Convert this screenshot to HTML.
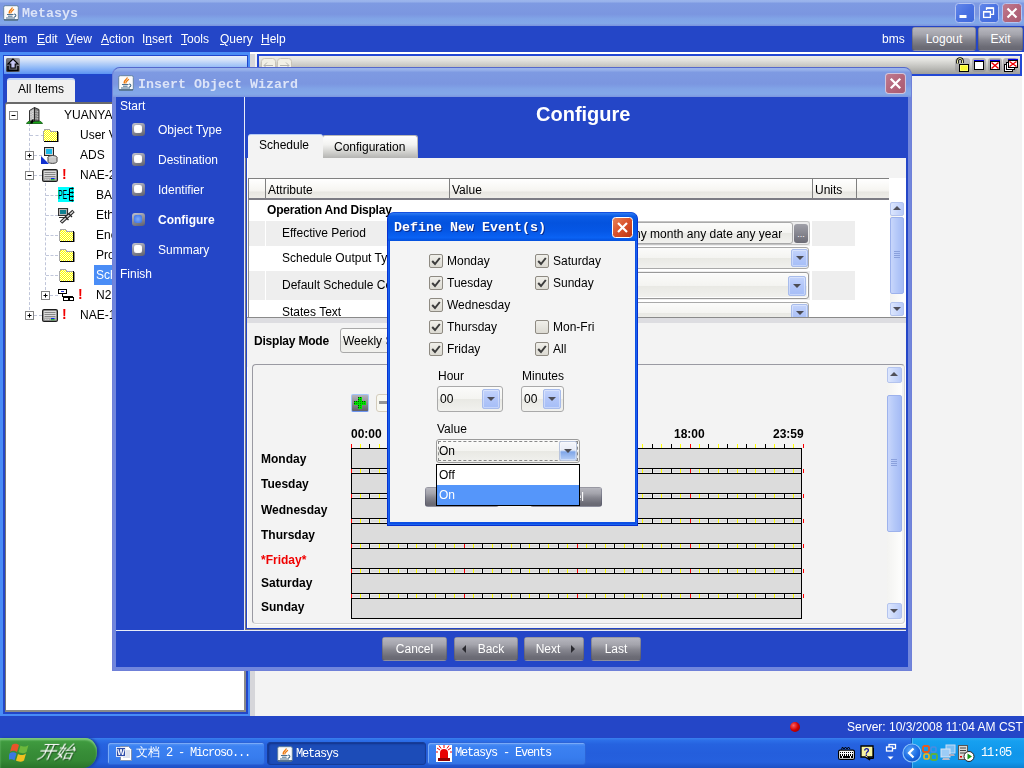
<!DOCTYPE html>
<html><head><meta charset="utf-8"><title>Metasys</title>
<style>
*{box-sizing:border-box;margin:0;padding:0}
html,body{width:1024px;height:768px;overflow:hidden;background:#2446C7;font-family:"Liberation Sans",sans-serif;font-size:12px;color:#000}
.a{position:absolute}
.t{position:absolute;white-space:nowrap;line-height:16px;font-size:12px;will-change:transform}
.w{color:#fff}
.mono{font-family:"Liberation Mono","WenQuanYi Zen Hei",monospace;font-weight:bold;font-size:13.33px}
.b{font-weight:bold}
.gbtn{position:absolute;border-radius:3px;background:linear-gradient(#B6B6BE 0,#A4A4AC 30%,#85858E 55%,#6C6C76 85%,#686872 100%);color:#fff;text-align:center;font-size:12px;border:1px solid rgba(70,74,100,0.35);border-top-color:rgba(200,200,210,0.5)}
.cb{position:absolute;width:14px;height:14px;border:1px solid #8E8A82;border-radius:2px;background:linear-gradient(#F0EFEA,#DCDAD2)}
.cb svg{position:absolute;left:1px;top:1px}
.combo{position:absolute;border:1px solid #A9A9A9;border-radius:3px;background:linear-gradient(#FBFBFA 0,#F4F4F1 50%,#E9E9E4 52%,#F1F1EE 100%)}
.arr{position:absolute;border:1px solid #A8BCEB;border-radius:2px;background:linear-gradient(#C4D4FB,#B2C6F9 50%,#A6BEF7 100%);box-shadow:inset 0 0 0 1px rgba(255,255,255,0.35)}
.arr:after{content:"";position:absolute;left:50%;top:50%;margin:-2px 0 0 -4px;border:4px solid transparent;border-top:4px solid #4C4C54;border-bottom:0}
.sbtn{position:absolute;border:1px solid #B4C4EE;border-radius:2px;background:linear-gradient(90deg,#DCE6FD,#B9CBF9)}
.hd{position:absolute;top:178px;height:22px;border-left:1px solid #808080;border-top:1px solid #808080;border-bottom:2px solid #7C7C84;background:linear-gradient(#FFFFFF 0,#F6F5F1 60%,#E8E7E2 70%,#EEEDE8 100%)}
</style></head><body>
<div class="a" style="left:0;top:0;width:1024px;height:26px;background:linear-gradient(#9CB5EC 0,#98B2EB 6%,#7E9AE2 13%,#7B96E0 55%,#81A4E7 72%,#83A8E8 90%,#7A92DD 100%)"></div>
<svg class="a" style="left:3px;top:5px" width="16" height="16" viewBox="0 0 16 16"><rect x="0.700" y="0.700" width="14.600" height="14.600" rx="1.500" fill="#FBFBFA" stroke="#5E7E9C" stroke-width="0.900"/><path d="M1 14.800h14" stroke="#3C5C78" stroke-width="1.200"/><path d="M6.500 8.500c-1.500-2 1.500-3.500 3-6M8 8.500c-1-1.500 1.500-2.500 2.800-4.500" stroke="#EE7A10" stroke-width="1.300" fill="none"/><path d="M4 9.500h6.500M5 11.200h4.500M3 13h9" stroke="#4A7090" stroke-width="1"/><path d="M11 9c2.500 0 2.500 2.800 0 3" stroke="#4A7090" stroke-width="1.100" fill="none"/></svg>
<div class="t mono" style="left:22px;top:6px;color:#DCE4F8">Metasys</div>
<svg class="a" width="0" height="0"><defs><linearGradient id="wb" x1="0" y1="0" x2="1" y2="1"><stop offset="0" stop-color="#6488EA"/><stop offset="0.500" stop-color="#4A72E2"/><stop offset="1" stop-color="#3E68DC"/></linearGradient><linearGradient id="wc" x1="0" y1="0" x2="1" y2="1"><stop offset="0" stop-color="#C07C90"/><stop offset="0.500" stop-color="#B4667C"/><stop offset="1" stop-color="#A85A70"/></linearGradient></defs></svg>
<svg class="a" style="left:955px;top:3px" width="20" height="20" viewBox="0 0 20 20"><rect x="0.500" y="0.500" width="19" height="19" rx="3" fill="url(#wb)" stroke="#B4C4F2"/><rect x="4.500" y="12" width="7" height="3" fill="#fff"/></svg>
<svg class="a" style="left:979px;top:3px" width="20" height="20" viewBox="0 0 20 20"><rect x="0.500" y="0.500" width="19" height="19" rx="3" fill="url(#wb)" stroke="#B4C4F2"/><path d="M7.500 7V4.800h7v6.500H12" fill="none" stroke="#fff" stroke-width="1.300"/><path d="M7.500 5.300h7" stroke="#fff" stroke-width="1.600"/><rect x="4.600" y="8.600" width="6.800" height="5.800" fill="none" stroke="#fff" stroke-width="1.300"/><path d="M4.600 8.800h6.800" stroke="#fff" stroke-width="1.600"/></svg>
<svg class="a" style="left:1002px;top:3px" width="20" height="20" viewBox="0 0 20 20"><rect x="0.500" y="0.500" width="19" height="19" rx="3" fill="url(#wc)" stroke="#B4C4F2"/><path d="M5.500 5.500l9 9M14.500 5.500l-9 9" stroke="#fff" stroke-width="2.200"/></svg>
<div class="a" style="left:0;top:26px;width:1024px;height:27px;background:#2446C7"></div>
<div class="t w" style="left:4px;top:31px"><u>I</u>tem</div>
<div class="t w" style="left:37px;top:31px"><u>E</u>dit</div>
<div class="t w" style="left:66px;top:31px"><u>V</u>iew</div>
<div class="t w" style="left:101px;top:31px"><u>A</u>ction</div>
<div class="t w" style="left:142px;top:31px">I<u>n</u>sert</div>
<div class="t w" style="left:181px;top:31px"><u>T</u>ools</div>
<div class="t w" style="left:220px;top:31px"><u>Q</u>uery</div>
<div class="t w" style="left:261px;top:31px"><u>H</u>elp</div>
<div class="t w" style="left:882px;top:31px">bms</div>
<div class="gbtn" style="left:912px;top:27px;width:64px;height:24px;line-height:22px">Logout</div>
<div class="gbtn" style="left:978px;top:27px;width:45px;height:24px;line-height:22px">Exit</div>
<div class="a" style="left:0;top:52px;width:250px;height:664px;background:#2446C7;border:2px solid #4A8CF6;border-left-width:3px;border-top-width:3px"></div>
<div class="a" style="left:3px;top:55px;width:245px;height:21px;border:1px solid #2046CC;border-bottom-width:2px;background:linear-gradient(#EAF0F9 0,#D0DFF8 25%,#98BEF7 60%,#5C93F3 100%)"></div>
<svg class="a" style="left:6px;top:58px" width="14" height="14" viewBox="0 0 14 14"><defs><linearGradient id="tg" x1="0" y1="1" x2="1" y2="0"><stop offset="0" stop-color="#3C3C44"/><stop offset="1" stop-color="#A8A8B0"/></linearGradient></defs><rect width="14" height="14" rx="1.500" fill="url(#tg)"/><path d="M7 1L2 6h2.800v4h4.400V6H12z" fill="#C8C8F4" stroke="#000" stroke-width="1.100"/><path d="M2 8v4.500h10V8" fill="none" stroke="#000" stroke-width="1.500"/></svg>
<div class="a" style="left:7px;top:78px;width:68px;height:25px;background:#F0F0F0;border-radius:3px 3px 0 0;border-top:2px solid #BFD4F8"></div>
<div class="t" style="left:18px;top:81px">All Items</div>
<div class="a" style="left:5px;top:102px;width:241px;height:610px;background:#fff;border:2px solid #8A8A8A;border-left:1px solid #767676;border-top:2px solid #6A6A6A;border-radius:3px 0 0 0"></div>
<div class="a" style="left:250px;top:52px;width:774px;height:664px;background:#F3F3F3"></div>
<div class="a" style="left:250px;top:52px;width:5px;height:664px;background:#D6D6DA"></div>
<div class="a" style="left:250px;top:52px;width:774px;height:2px;background:#fff"></div>
<div class="a" style="left:257px;top:54px;width:765px;height:22px;border:2px solid #2348D4;background:linear-gradient(#EEEEEA 0,#E0E0DC 25%,#BEBEBA 65%,#9E9E9A 100%)"></div>
<div class="a" style="left:972px;top:58px;width:14px;height:14px;border-radius:3px;background:#8E8E92;opacity:0.55"></div>
<div class="a" style="left:988px;top:58px;width:14px;height:14px;border-radius:3px;background:#8E8E92;opacity:0.55"></div>
<div class="a" style="left:1003px;top:58px;width:14px;height:14px;border-radius:3px;background:#8E8E92;opacity:0.55"></div>
<div class="a" style="left:955px;top:58px;width:15px;height:14px;border-radius:3px;background:#8E8E92;opacity:0.45"></div>
<svg class="a" style="left:955px;top:57px" width="16" height="16" viewBox="0 0 16 16"><path d="M2.500 6.500V4a2.500 2.500 0 0 1 5 0v2" fill="none" stroke="#000" stroke-width="2.600"/><path d="M2.500 6.500V4a2.500 2.500 0 0 1 5 0v2" fill="none" stroke="#E8E8A0" stroke-width="1"/><rect x="4.500" y="7.500" width="9" height="7" fill="#FFFF66" stroke="#000"/><path d="M6 10h6M6 12h6" stroke="#F0F000" stroke-width="1"/></svg>
<svg class="a" style="left:974px;top:59px" width="11" height="11" viewBox="0 0 11 11" shape-rendering="crispEdges"><rect x="0" y="0.800" width="10" height="1.200" fill="#0000E0"/><rect x="0.500" y="2.500" width="9" height="8" fill="#fff" stroke="#000"/></svg>
<svg class="a" style="left:990px;top:59px" width="11" height="11" viewBox="0 0 11 11"><rect x="0" y="0.800" width="10" height="1.200" fill="#0000E0"/><rect x="0.500" y="2.500" width="9" height="8" fill="#fff" stroke="#000"/><path d="M1.500 3.500l7 6M8.500 3.500l-7 6" stroke="#F00000" stroke-width="1.500"/></svg>
<svg class="a" style="left:1004px;top:58px" width="14" height="14" viewBox="0 0 14 14"><rect x="0.500" y="6.500" width="8" height="7" fill="#fff" stroke="#000"/><rect x="2.500" y="4.500" width="8" height="7" fill="#fff" stroke="#000"/><rect x="4" y="0.800" width="10" height="1.200" fill="#0000E0"/><rect x="4.500" y="2.500" width="9" height="7" fill="#fff" stroke="#000"/><path d="M5.500 3.500l7 5M12.500 3.500l-7 5" stroke="#F00000" stroke-width="1.400"/></svg>
<svg class="a" style="left:261px;top:58px" width="15" height="16" viewBox="0 0 15 16"><rect x="0.500" y="0.500" width="14" height="17" rx="3" fill="#F2F0E6" stroke="#C8C4B8"/><path d="M3 7.500h9M6 4.500l-3 3 3 3" fill="none" stroke="#B4B4B0" stroke-width="1"/></svg>
<svg class="a" style="left:277px;top:58px" width="15" height="16" viewBox="0 0 15 16"><rect x="0.500" y="0.500" width="14" height="17" rx="3" fill="#F2F0E6" stroke="#C8C4B8"/><path d="M3 7.500h9M9 4.500l3 3-3 3" fill="none" stroke="#B4B4B0" stroke-width="1"/></svg>
<div class="a" style="left:1022px;top:52px;width:2px;height:664px;background:#fff"></div>
<div class="a" style="left:0;top:716px;width:1024px;height:22px;background:#2446C7"></div>
<div class="a" style="left:790px;top:722px;width:10px;height:10px;border-radius:5px;background:radial-gradient(circle at 35% 35%,#FF6060,#D00000 50%,#800000)"></div>
<div class="t w" style="left:847px;top:719px">Server: 10/3/2008 11:04 AM CST</div>
<div class="a" style="left:0;top:1px"><svg class="a" width="0" height="0"><defs><pattern id="dith" width="2" height="2" patternUnits="userSpaceOnUse"><rect width="2" height="2" fill="#FFFF00"/><rect width="1" height="1" fill="#FFFFD8"/><rect x="1" y="1" width="1" height="1" fill="#FFFFD8"/></pattern></defs></svg>
<div class="a" style="left:29px;top:122px;width:0;height:192px;border-left:1px dashed #C0C6DA"></div>
<div class="a" style="left:45px;top:182px;width:0;height:112px;border-left:1px dashed #C0C6DA"></div>
<div class="a" style="left:30px;top:134px;width:14px;height:0;border-top:1px dashed #C0C6DA"></div>
<div class="a" style="left:46px;top:194px;width:12px;height:0;border-top:1px dashed #C0C6DA"></div>
<div class="a" style="left:46px;top:214px;width:12px;height:0;border-top:1px dashed #C0C6DA"></div>
<div class="a" style="left:46px;top:234px;width:12px;height:0;border-top:1px dashed #C0C6DA"></div>
<div class="a" style="left:46px;top:254px;width:12px;height:0;border-top:1px dashed #C0C6DA"></div>
<div class="a" style="left:46px;top:274px;width:12px;height:0;border-top:1px dashed #C0C6DA"></div>
<div class="a" style="left:34px;top:154px;width:8px;height:0;border-top:1px dashed #C0C6DA"></div>
<div class="a" style="left:34px;top:174px;width:8px;height:0;border-top:1px dashed #C0C6DA"></div>
<div class="a" style="left:50px;top:294px;width:8px;height:0;border-top:1px dashed #C0C6DA"></div>
<div class="a" style="left:34px;top:314px;width:8px;height:0;border-top:1px dashed #C0C6DA"></div>
<svg class="a" style="left:9px;top:110px" width="9" height="9" viewBox="0 0 9 9"><rect x="0.500" y="0.500" width="8" height="8" fill="#fff" stroke="#848484"/><path d="M2.500 4.500h4" stroke="#000"/></svg>
<svg class="a" style="left:26px;top:106px" width="17" height="17" viewBox="0 0 17 17"><path d="M0.500 16.500c1-2 3-3 8-3s7 1 8 3z" fill="#18A018" stroke="#0A5A0A" stroke-width="0.800"/><path d="M3.500 14V3.500l5-3v14z" fill="#B4B4B4" stroke="#222" stroke-width="0.900"/><path d="M8.500 0.500l4.500 2V14H8.500z" fill="#7C7C7C" stroke="#222" stroke-width="0.900"/><path d="M5 4.500v8M6.800 3.500v9" stroke="#F0F0F0" stroke-width="1" stroke-dasharray="1.200 1.200"/><path d="M10 3.500v9M11.700 4v8.500" stroke="#D8D8D8" stroke-width="0.900" stroke-dasharray="1.200 1.200"/><path d="M4 16.500l2-4h2l-1.500 4z" fill="#000"/></svg>
<div class="t" style="left:64px;top:106px">YUANYANG</div>
<svg class="a" style="left:43px;top:128px" width="16" height="13" viewBox="0 0 16 13" shape-rendering="crispEdges"><path d="M1 12V2l1-1h4l1 1h7v10z" fill="url(#dith)"/><path d="M0.500 12V2.500l1.500-2h4.500l1 1.500h6.500" fill="none" stroke="#A8A8A8"/><path d="M14.500 2v10.500H0.500" fill="none" stroke="#000"/><path d="M15.500 3v10.500H1" fill="none" stroke="#000" opacity="0.450"/></svg>
<div class="t" style="left:80px;top:126px">User Views</div>
<svg class="a" style="left:25px;top:150px" width="9" height="9" viewBox="0 0 9 9"><rect x="0.500" y="0.500" width="8" height="8" fill="#fff" stroke="#848484"/><path d="M2.500 4.500h4" stroke="#000"/><path d="M4.500 2.500v4" stroke="#000"/></svg>
<svg class="a" style="left:41px;top:146px" width="17" height="17" viewBox="0 0 17 17"><rect x="3.500" y="0.500" width="9" height="8" fill="#D0D0D0" stroke="#222"/><rect x="5" y="2" width="6" height="5" fill="#18B8E8"/><path d="M0 9v8h8z" fill="#1030D0"/><ellipse cx="11.500" cy="10.500" rx="4.500" ry="2" fill="#E0E0E0" stroke="#444"/><path d="M7 10.500v4c0 2.500 9 2.500 9 0v-4" fill="#C8C8C8" stroke="#444"/></svg>
<div class="t" style="left:80px;top:146px">ADS</div>
<svg class="a" style="left:25px;top:170px" width="9" height="9" viewBox="0 0 9 9"><rect x="0.500" y="0.500" width="8" height="8" fill="#fff" stroke="#848484"/><path d="M2.500 4.500h4" stroke="#000"/></svg>
<svg class="a" style="left:42px;top:168px" width="16" height="13" viewBox="0 0 16 13"><rect x="0.600" y="0.600" width="14.800" height="11.800" rx="1.500" fill="#ACACAC" stroke="#1C1C1C" stroke-width="1.200"/><rect x="2" y="2" width="12" height="6.500" fill="#DCDCDC"/><path d="M2.500 3.500h11M2.500 5.500h11M2.500 7.500h11" stroke="#7C7C7C" stroke-width="0.900"/><path d="M3 10.500h4" stroke="#D0D0D0" stroke-width="1" stroke-dasharray="1 0.500"/><rect x="9" y="9" width="3.500" height="1.200" fill="#1020F0"/><rect x="9" y="10.200" width="3.500" height="1" fill="#10C010"/></svg>
<div class="t b" style="left:62px;top:165px;color:#F00000;font-size:14px">!</div>
<div class="t" style="left:80px;top:166px">NAE-2</div>
<svg class="a" style="left:58px;top:186px" width="16" height="15" viewBox="0 0 16 15"><rect width="16" height="15" fill="#00FFFF"/><text x="0.300" y="12.300" font-family="Liberation Sans,sans-serif" font-size="12.500" fill="#000" textLength="9" lengthAdjust="spacingAndGlyphs">PE</text><path d="M9 7.500h2.500M11.500 1.500v12M11.500 1.500h2.500M11.500 5.500h2.500M11.500 9.500h2.500M11.500 13.500h2.500" fill="none" stroke="#000" stroke-width="1.100"/><path d="M13.800 0l2.200 1.500-2.200 1.500zM13.800 4l2.200 1.500-2.200 1.500zM13.800 8l2.200 1.500-2.200 1.500zM13.800 12l2.200 1.500-2.200 1.500z" fill="#000"/></svg>
<div class="t" style="left:96px;top:186px">BACnet</div>
<svg class="a" style="left:58px;top:206px" width="17" height="17" viewBox="0 0 17 17"><rect x="0.500" y="1.500" width="9" height="7" fill="#B8B8B8" stroke="#333"/><rect x="2" y="3" width="6" height="4" fill="#108090"/><path d="M9.500 1v7M1 10.500h8" stroke="#333" stroke-width="1.200"/><path d="M3 15.500L15.500 4" stroke="#222" stroke-width="3.600"/><path d="M3.500 15L15 4.500" stroke="#D8D8D8" stroke-width="1.600"/><path d="M7 9.500l3.500 3.500M10.500 6.500l3.500 3.500" stroke="#222" stroke-width="1.300"/></svg>
<div class="t" style="left:96px;top:206px">Ethernet</div>
<svg class="a" style="left:59px;top:228px" width="16" height="13" viewBox="0 0 16 13" shape-rendering="crispEdges"><path d="M1 12V2l1-1h4l1 1h7v10z" fill="url(#dith)"/><path d="M0.500 12V2.500l1.500-2h4.500l1 1.500h6.500" fill="none" stroke="#A8A8A8"/><path d="M14.500 2v10.500H0.500" fill="none" stroke="#000"/><path d="M15.500 3v10.500H1" fill="none" stroke="#000" opacity="0.450"/></svg>
<div class="t" style="left:96px;top:226px">Energy</div>
<svg class="a" style="left:59px;top:248px" width="16" height="13" viewBox="0 0 16 13" shape-rendering="crispEdges"><path d="M1 12V2l1-1h4l1 1h7v10z" fill="url(#dith)"/><path d="M0.500 12V2.500l1.500-2h4.500l1 1.500h6.500" fill="none" stroke="#A8A8A8"/><path d="M14.500 2v10.500H0.500" fill="none" stroke="#000"/><path d="M15.500 3v10.500H1" fill="none" stroke="#000" opacity="0.450"/></svg>
<div class="t" style="left:96px;top:246px">Programming</div>
<svg class="a" style="left:59px;top:268px" width="16" height="13" viewBox="0 0 16 13" shape-rendering="crispEdges"><path d="M1 12V2l1-1h4l1 1h7v10z" fill="url(#dith)"/><path d="M0.500 12V2.500l1.500-2h4.500l1 1.500h6.500" fill="none" stroke="#A8A8A8"/><path d="M14.500 2v10.500H0.500" fill="none" stroke="#000"/><path d="M15.500 3v10.500H1" fill="none" stroke="#000" opacity="0.450"/></svg>
<div class="a" style="left:94px;top:264px;width:60px;height:20px;background:#4A8DF6"></div>
<div class="t w" style="left:96px;top:266px">Schedules</div>
<svg class="a" style="left:41px;top:290px" width="9" height="9" viewBox="0 0 9 9"><rect x="0.500" y="0.500" width="8" height="8" fill="#fff" stroke="#848484"/><path d="M2.500 4.500h4" stroke="#000"/><path d="M4.500 2.500v4" stroke="#000"/></svg>
<svg class="a" style="left:57px;top:287px" width="18" height="14" viewBox="0 0 18 14" shape-rendering="crispEdges"><rect x="1.500" y="1.500" width="8" height="4" fill="#fff" stroke="#000"/><rect x="4" y="3" width="3" height="1" fill="#2030E0"/><path d="M5.500 6v2.500h10V10M9.500 8.500V10" fill="none" stroke="#000"/><rect x="6.500" y="9.500" width="5" height="3" fill="#fff" stroke="#000"/><rect x="12.500" y="9.500" width="4" height="3" fill="#fff" stroke="#000"/></svg>
<div class="t b" style="left:78px;top:285px;color:#F00000;font-size:14px">!</div>
<div class="t" style="left:96px;top:286px">N2 Trunk</div>
<svg class="a" style="left:25px;top:310px" width="9" height="9" viewBox="0 0 9 9"><rect x="0.500" y="0.500" width="8" height="8" fill="#fff" stroke="#848484"/><path d="M2.500 4.500h4" stroke="#000"/><path d="M4.500 2.500v4" stroke="#000"/></svg>
<svg class="a" style="left:42px;top:308px" width="16" height="13" viewBox="0 0 16 13"><rect x="0.600" y="0.600" width="14.800" height="11.800" rx="1.500" fill="#ACACAC" stroke="#1C1C1C" stroke-width="1.200"/><rect x="2" y="2" width="12" height="6.500" fill="#DCDCDC"/><path d="M2.500 3.500h11M2.500 5.500h11M2.500 7.500h11" stroke="#7C7C7C" stroke-width="0.900"/><path d="M3 10.500h4" stroke="#D0D0D0" stroke-width="1" stroke-dasharray="1 0.500"/><rect x="9" y="9" width="3.500" height="1.200" fill="#1020F0"/><rect x="9" y="10.200" width="3.500" height="1" fill="#10C010"/></svg>
<div class="t b" style="left:62px;top:305px;color:#F00000;font-size:14px">!</div>
<div class="t" style="left:80px;top:306px">NAE-1</div></div>
<div class="a" style="left:112px;top:67px;width:800px;height:604px;border-radius:8px 8px 0 0;background:#7186DC;border:1px solid #6F80D8;border-top-color:#5468CC"></div>
<div class="a" style="left:113px;top:68px;width:798px;height:29px;border-radius:7px 7px 0 0;background:linear-gradient(#9CB5EC 0,#96B0EA 7%,#7E9AE2 15%,#7B96E0 55%,#81A4E7 72%,#83A8E8 90%,#7C96DF 100%)"></div>
<svg class="a" style="left:118px;top:75px" width="16" height="16" viewBox="0 0 16 16"><rect x="0.700" y="0.700" width="14.600" height="14.600" rx="1.500" fill="#FBFBFA" stroke="#5E7E9C" stroke-width="0.900"/><path d="M1 14.800h14" stroke="#3C5C78" stroke-width="1.200"/><path d="M6.500 8.500c-1.500-2 1.500-3.500 3-6M8 8.500c-1-1.500 1.500-2.500 2.800-4.500" stroke="#EE7A10" stroke-width="1.300" fill="none"/><path d="M4 9.500h6.500M5 11.200h4.500M3 13h9" stroke="#4A7090" stroke-width="1"/><path d="M11 9c2.500 0 2.500 2.800 0 3" stroke="#4A7090" stroke-width="1.100" fill="none"/></svg>
<div class="t mono" style="left:138px;top:77px;color:#DCE4F8">Insert Object Wizard</div>
<svg class="a" style="left:885px;top:73px" width="21" height="21" viewBox="0 0 20 20"><rect x="0.500" y="0.500" width="19" height="19" rx="3" fill="url(#wc)" stroke="#D0C4DC"/><path d="M5.500 5.500l9 9M14.500 5.500l-9 9" stroke="#fff" stroke-width="2.200"/></svg>
<div class="a" style="left:116px;top:97px;width:792px;height:570px;background:#2446C7"></div>
<div class="a" style="left:244px;top:97px;width:1px;height:534px;background:#E8ECF8"></div>
<div class="a" style="left:116px;top:630px;width:790px;height:1px;background:#E8ECF8"></div>
<div class="t w" style="left:120px;top:98px">Start</div>
<div class="t w" style="left:120px;top:266px">Finish</div>
<div class="a" style="left:132px;top:123px;width:13px;height:13px;border-radius:3px;background:linear-gradient(160deg,#C4C6D0 0,#9A9CA8 35%,#5C5E6C 100%);padding:2px 3px 3px 2px"><div style="width:8px;height:8px;border-radius:2px;background:radial-gradient(circle at 50% 45%,#FFFFFF 0,#FFFFFF 55%,#E4E4EA 100%)"></div></div>
<div class="t w" style="left:158px;top:122px">Object Type</div>
<div class="a" style="left:132px;top:153px;width:13px;height:13px;border-radius:3px;background:linear-gradient(160deg,#C4C6D0 0,#9A9CA8 35%,#5C5E6C 100%);padding:2px 3px 3px 2px"><div style="width:8px;height:8px;border-radius:2px;background:radial-gradient(circle at 50% 45%,#FFFFFF 0,#FFFFFF 55%,#E4E4EA 100%)"></div></div>
<div class="t w" style="left:158px;top:152px">Destination</div>
<div class="a" style="left:132px;top:183px;width:13px;height:13px;border-radius:3px;background:linear-gradient(160deg,#C4C6D0 0,#9A9CA8 35%,#5C5E6C 100%);padding:2px 3px 3px 2px"><div style="width:8px;height:8px;border-radius:2px;background:radial-gradient(circle at 50% 45%,#FFFFFF 0,#FFFFFF 55%,#E4E4EA 100%)"></div></div>
<div class="t w" style="left:158px;top:182px">Identifier</div>
<div class="a" style="left:132px;top:213px;width:13px;height:13px;border-radius:3px;background:linear-gradient(160deg,#C4C6D0 0,#9A9CA8 35%,#5C5E6C 100%);padding:2px 3px 3px 2px"><div style="width:8px;height:8px;border-radius:2px;background:radial-gradient(circle at 50% 50%,#7FAAF8 0,#4F86F2 60%,#3A6ADC 100%)"></div></div>
<div class="t w b" style="left:158px;top:212px">Configure</div>
<div class="a" style="left:132px;top:243px;width:13px;height:13px;border-radius:3px;background:linear-gradient(160deg,#C4C6D0 0,#9A9CA8 35%,#5C5E6C 100%);padding:2px 3px 3px 2px"><div style="width:8px;height:8px;border-radius:2px;background:radial-gradient(circle at 50% 45%,#FFFFFF 0,#FFFFFF 55%,#E4E4EA 100%)"></div></div>
<div class="t w" style="left:158px;top:242px">Summary</div>
<div class="t w b" style="left:536px;top:101px;font-size:20px;line-height:26px">Configure</div>
<div class="a" style="left:322px;top:135px;width:96px;height:23px;border:1px solid #B8B8B8;border-bottom:0;border-radius:3px 3px 0 0;background:linear-gradient(#FFFFFF 0,#F2F2F0 40%,#CFCFCC 75%,#B4B4B2 100%)"></div>
<div class="t" style="left:334px;top:139px">Configuration</div>
<div class="a" style="left:248px;top:134px;width:75px;height:24px;background:#F3F3F3;border-top:1px solid #B5CBF5;border-radius:3px 3px 0 0"></div>
<div class="t" style="left:259px;top:137px">Schedule</div>
<div class="a" style="left:247px;top:158px;width:659px;height:470px;background:#F3F3F3;border-left:1px solid #fff"></div>
<div class="a" style="left:245px;top:158px;width:1px;height:471px;background:#767680"></div>
<div class="a" style="left:245px;top:629px;width:661px;height:1px;background:#767680"></div>
<div class="a" style="left:248px;top:178px;width:658px;height:140px;background:#fff;border-left:1px solid #8A8A8A;border-bottom:1px solid #8A8A8A"></div>
<div class="hd" style="left:248px;width:17px"></div>
<div class="hd" style="left:265px;width:184px"></div>
<div class="hd" style="left:449px;width:363px"></div>
<div class="hd" style="left:812px;width:44px"></div>
<div class="hd" style="left:856px;width:33px;border-right:0"></div>
<div class="t" style="left:268px;top:182px">Attribute</div>
<div class="t" style="left:452px;top:182px">Value</div>
<div class="t" style="left:815px;top:182px">Units</div>
<div class="a" style="left:249px;top:221px;width:16px;height:25px;background:#EEEEEE"></div>
<div class="a" style="left:266px;top:221px;width:183px;height:25px;background:#EEEEEE"></div>
<div class="a" style="left:450px;top:221px;width:360px;height:25px;background:#EEEEEE"></div>
<div class="a" style="left:812px;top:221px;width:43px;height:25px;background:#EEEEEE"></div>
<div class="a" style="left:249px;top:271px;width:16px;height:29px;background:#EEEEEE"></div>
<div class="a" style="left:266px;top:271px;width:183px;height:29px;background:#EEEEEE"></div>
<div class="a" style="left:450px;top:271px;width:360px;height:29px;background:#EEEEEE"></div>
<div class="a" style="left:812px;top:271px;width:43px;height:29px;background:#EEEEEE"></div>
<div class="t b" style="left:267px;top:202px;letter-spacing:-0.2px">Operation And Display</div>
<div class="t" style="left:282px;top:225px">Effective Period</div>
<div class="t" style="left:282px;top:250px">Schedule Output Type</div>
<div class="t" style="left:282px;top:277px">Default Schedule Command</div>
<div class="t" style="left:282px;top:304px">States Text</div>
<div class="a" style="left:451px;top:221px;width:359px;height:24px;border:1px solid #C4C4C4;border-radius:3px;background:#ECECEC"></div>
<div class="combo" style="left:452px;top:222px;width:341px;height:22px"></div>
<div class="a" style="left:454px;top:226px;width:328px;height:16px;overflow:hidden"><div class="t" style="right:0;top:0">any day any day of week any month any date any year</div></div>
<div class="a" style="left:794px;top:224px;width:14px;height:19px;border-radius:3px;background:linear-gradient(#A0A0A8,#6C6C76);color:#fff;font-size:9px;line-height:20px;text-align:center">...</div>
<div class="combo" style="left:452px;top:247px;width:357px;height:22px"></div>
<div class="arr" style="left:791px;top:249px;width:17px;height:18px"></div>
<div class="combo" style="left:452px;top:272px;width:357px;height:27px;border-color:#999;box-shadow:inset 0 0 0 1px #FDFDFD"></div>
<div class="arr" style="left:788px;top:276px;width:18px;height:20px"></div>
<div class="combo" style="left:452px;top:302px;width:357px;height:22px"></div>
<div class="arr" style="left:791px;top:304px;width:17px;height:18px"></div>
<div class="a" style="left:247px;top:317px;width:659px;height:50px;background:#F3F3F3"></div>
<div class="a" style="left:247px;top:317px;width:659px;height:1px;background:#8A8A8A"></div>
<div class="a" style="left:247px;top:318px;width:659px;height:5px;background:#DDDDE1"></div>
<div class="a" style="left:890px;top:202px;width:14px;height:115px;background:linear-gradient(90deg,#F3F3F1,#FEFEFD)"></div>
<div class="sbtn" style="left:890px;top:202px;width:14px;height:14px"></div>
<div class="a" style="left:893px;top:206px;border:4px solid transparent;border-bottom:4px solid #50505A;border-top:0"></div>
<div class="sbtn" style="left:890px;top:302px;width:14px;height:14px"></div>
<div class="a" style="left:893px;top:307px;border:4px solid transparent;border-top:4px solid #50505A;border-bottom:0"></div>
<div class="a" style="left:890px;top:217px;width:14px;height:77px;border:1px solid #9DB2EC;border-radius:2px;background:linear-gradient(90deg,#C8D6FB,#B4C8F8 50%,#A5BBF5)"></div>
<div class="a" style="left:894px;top:251px;width:6px;height:1px;background:#8AA0DC"></div>
<div class="a" style="left:894px;top:253px;width:6px;height:1px;background:#8AA0DC"></div>
<div class="a" style="left:894px;top:255px;width:6px;height:1px;background:#8AA0DC"></div>
<div class="a" style="left:894px;top:257px;width:6px;height:1px;background:#8AA0DC"></div>
<div class="t b" style="left:254px;top:333px;letter-spacing:-0.2px">Display Mode</div>
<div class="combo" style="left:340px;top:328px;width:150px;height:25px"></div>
<div class="t" style="left:343px;top:333px">Weekly Schedule</div>
<div class="a" style="left:252px;top:364px;width:653px;height:260px;border:1px solid #9A9AA2;border-radius:4px;border-right-color:#D4D4D4;border-bottom-color:#D4D4D4;background:#F3F3F3;box-shadow:1px 1px 0 #fff"></div>
<div class="a" style="left:887px;top:367px;width:15px;height:253px;background:linear-gradient(90deg,#F3F3F1,#FEFEFD)"></div>
<div class="sbtn" style="left:887px;top:367px;width:15px;height:16px"></div>
<div class="a" style="left:890px;top:372px;border:4px solid transparent;border-bottom:4px solid #50505A;border-top:0"></div>
<div class="sbtn" style="left:887px;top:603px;width:15px;height:16px"></div>
<div class="a" style="left:890px;top:609px;border:4px solid transparent;border-top:4px solid #50505A;border-bottom:0"></div>
<div class="a" style="left:887px;top:395px;width:15px;height:137px;border:1px solid #9DB2EC;border-radius:2px;background:linear-gradient(90deg,#C8D6FB,#B4C8F8 50%,#A5BBF5)"></div>
<div class="a" style="left:891px;top:459px;width:6px;height:1px;background:#8AA0DC"></div>
<div class="a" style="left:891px;top:461px;width:6px;height:1px;background:#8AA0DC"></div>
<div class="a" style="left:891px;top:463px;width:6px;height:1px;background:#8AA0DC"></div>
<div class="a" style="left:891px;top:465px;width:6px;height:1px;background:#8AA0DC"></div>
<div class="a" style="left:351px;top:394px;width:18px;height:18px;border:1px solid #A4C4F8;border-bottom-color:#6C94F0;border-radius:2px;background:linear-gradient(#B4B4BC,#8C8C94 50%,#606068)"></div>
<svg class="a" style="left:354px;top:397px" width="12" height="12" viewBox="0 0 12 12"><defs><pattern id="gd" width="2" height="2" patternUnits="userSpaceOnUse"><rect width="2" height="2" fill="#00E400"/><rect width="1" height="1" fill="#063806"/></pattern></defs><path d="M4 0h4v4h4v4H8v4H4V8H0V4h4z" fill="url(#gd)"/><path d="M5 1h2v4h4v2H7v4H5V7H1V5h4z" fill="#00DC00" opacity="0.550"/></svg>
<div class="a" style="left:376px;top:394px;width:18px;height:18px;border:1px solid #D4CCBC;border-radius:3px;background:#F8F8F1"></div>
<div class="a" style="left:379px;top:401px;width:12px;height:3px;background:#969696"></div>
<div class="t b" style="left:351px;top:426px">00:00</div>
<div class="t b" style="left:674px;top:426px">18:00</div>
<div class="t b" style="left:773px;top:426px">23:59</div>
<svg class="a" style="left:0;top:0" width="1024" height="768" viewBox="0 0 1024 768" shape-rendering="crispEdges"><path d="M351.5 444V448" stroke="#FF0000"/><path d="M360.5 444V448" stroke="#FFFF00"/><path d="M369.5 444V448" stroke="#000"/><path d="M379.5 444V448" stroke="#FFFF00"/><path d="M388.5 444V448" stroke="#000"/><path d="M398.5 444V448" stroke="#FFFF00"/><path d="M407.5 444V448" stroke="#000"/><path d="M416.5 444V448" stroke="#FFFF00"/><path d="M426.5 444V448" stroke="#000"/><path d="M435.5 444V448" stroke="#FFFF00"/><path d="M445.5 444V448" stroke="#000"/><path d="M454.5 444V448" stroke="#FFFF00"/><path d="M464.5 444V448" stroke="#FF0000"/><path d="M473.5 444V448" stroke="#FFFF00"/><path d="M482.5 444V448" stroke="#000"/><path d="M492.5 444V448" stroke="#FFFF00"/><path d="M501.5 444V448" stroke="#000"/><path d="M511.5 444V448" stroke="#FFFF00"/><path d="M520.5 444V448" stroke="#000"/><path d="M529.5 444V448" stroke="#FFFF00"/><path d="M539.5 444V448" stroke="#000"/><path d="M548.5 444V448" stroke="#FFFF00"/><path d="M558.5 444V448" stroke="#000"/><path d="M567.5 444V448" stroke="#FFFF00"/><path d="M577.5 444V448" stroke="#FF0000"/><path d="M586.5 444V448" stroke="#FFFF00"/><path d="M595.5 444V448" stroke="#000"/><path d="M605.5 444V448" stroke="#FFFF00"/><path d="M614.5 444V448" stroke="#000"/><path d="M624.5 444V448" stroke="#FFFF00"/><path d="M633.5 444V448" stroke="#000"/><path d="M642.5 444V448" stroke="#FFFF00"/><path d="M652.5 444V448" stroke="#000"/><path d="M661.5 444V448" stroke="#FFFF00"/><path d="M671.5 444V448" stroke="#000"/><path d="M680.5 444V448" stroke="#FFFF00"/><path d="M690.5 444V448" stroke="#FF0000"/><path d="M699.5 444V448" stroke="#FFFF00"/><path d="M708.5 444V448" stroke="#000"/><path d="M718.5 444V448" stroke="#FFFF00"/><path d="M727.5 444V448" stroke="#000"/><path d="M737.5 444V448" stroke="#FFFF00"/><path d="M746.5 444V448" stroke="#000"/><path d="M755.5 444V448" stroke="#FFFF00"/><path d="M765.5 444V448" stroke="#000"/><path d="M774.5 444V448" stroke="#FFFF00"/><path d="M784.5 444V448" stroke="#000"/><path d="M793.5 444V448" stroke="#FFFF00"/><path d="M803.5 444V448" stroke="#FF0000"/><rect x="351.500" y="448.500" width="450" height="20" fill="#DCDCDC" stroke="#000"/><rect x="352" y="469" width="450" height="4" fill="#DCDCDC"/><path d="M352 469.500H802M352 472.500H802" stroke="#EAEAEA"/><path d="M351.5 469V473" stroke="#FF0000"/><path d="M360.5 469V473" stroke="#FFFF00"/><path d="M368.5 469V473M370.5 469V473" stroke="#EAEAEA"/><path d="M369.5 469V473" stroke="#000"/><path d="M379.5 469V473" stroke="#FFFF00"/><path d="M387.5 469V473M389.5 469V473" stroke="#EAEAEA"/><path d="M388.5 469V473" stroke="#000"/><path d="M398.5 469V473" stroke="#FFFF00"/><path d="M406.5 469V473M408.5 469V473" stroke="#EAEAEA"/><path d="M407.5 469V473" stroke="#000"/><path d="M416.5 469V473" stroke="#FFFF00"/><path d="M425.5 469V473M427.5 469V473" stroke="#EAEAEA"/><path d="M426.5 469V473" stroke="#000"/><path d="M435.5 469V473" stroke="#FFFF00"/><path d="M444.5 469V473M446.5 469V473" stroke="#EAEAEA"/><path d="M445.5 469V473" stroke="#000"/><path d="M454.5 469V473" stroke="#FFFF00"/><path d="M464.5 469V473" stroke="#FF0000"/><path d="M473.5 469V473" stroke="#FFFF00"/><path d="M481.5 469V473M483.5 469V473" stroke="#EAEAEA"/><path d="M482.5 469V473" stroke="#000"/><path d="M492.5 469V473" stroke="#FFFF00"/><path d="M500.5 469V473M502.5 469V473" stroke="#EAEAEA"/><path d="M501.5 469V473" stroke="#000"/><path d="M511.5 469V473" stroke="#FFFF00"/><path d="M519.5 469V473M521.5 469V473" stroke="#EAEAEA"/><path d="M520.5 469V473" stroke="#000"/><path d="M529.5 469V473" stroke="#FFFF00"/><path d="M538.5 469V473M540.5 469V473" stroke="#EAEAEA"/><path d="M539.5 469V473" stroke="#000"/><path d="M548.5 469V473" stroke="#FFFF00"/><path d="M557.5 469V473M559.5 469V473" stroke="#EAEAEA"/><path d="M558.5 469V473" stroke="#000"/><path d="M567.5 469V473" stroke="#FFFF00"/><path d="M577.5 469V473" stroke="#FF0000"/><path d="M586.5 469V473" stroke="#FFFF00"/><path d="M594.5 469V473M596.5 469V473" stroke="#EAEAEA"/><path d="M595.5 469V473" stroke="#000"/><path d="M605.5 469V473" stroke="#FFFF00"/><path d="M613.5 469V473M615.5 469V473" stroke="#EAEAEA"/><path d="M614.5 469V473" stroke="#000"/><path d="M624.5 469V473" stroke="#FFFF00"/><path d="M632.5 469V473M634.5 469V473" stroke="#EAEAEA"/><path d="M633.5 469V473" stroke="#000"/><path d="M642.5 469V473" stroke="#FFFF00"/><path d="M651.5 469V473M653.5 469V473" stroke="#EAEAEA"/><path d="M652.5 469V473" stroke="#000"/><path d="M661.5 469V473" stroke="#FFFF00"/><path d="M670.5 469V473M672.5 469V473" stroke="#EAEAEA"/><path d="M671.5 469V473" stroke="#000"/><path d="M680.5 469V473" stroke="#FFFF00"/><path d="M690.5 469V473" stroke="#FF0000"/><path d="M699.5 469V473" stroke="#FFFF00"/><path d="M707.5 469V473M709.5 469V473" stroke="#EAEAEA"/><path d="M708.5 469V473" stroke="#000"/><path d="M718.5 469V473" stroke="#FFFF00"/><path d="M726.5 469V473M728.5 469V473" stroke="#EAEAEA"/><path d="M727.5 469V473" stroke="#000"/><path d="M737.5 469V473" stroke="#FFFF00"/><path d="M745.5 469V473M747.5 469V473" stroke="#EAEAEA"/><path d="M746.5 469V473" stroke="#000"/><path d="M755.5 469V473" stroke="#FFFF00"/><path d="M764.5 469V473M766.5 469V473" stroke="#EAEAEA"/><path d="M765.5 469V473" stroke="#000"/><path d="M774.5 469V473" stroke="#FFFF00"/><path d="M783.5 469V473M785.5 469V473" stroke="#EAEAEA"/><path d="M784.5 469V473" stroke="#000"/><path d="M793.5 469V473" stroke="#FFFF00"/><path d="M803.5 469V473" stroke="#FF0000"/><path d="M801.500 469V473" stroke="#000"/><rect x="351.500" y="473.500" width="450" height="20" fill="#DCDCDC" stroke="#000"/><rect x="352" y="494" width="450" height="4" fill="#DCDCDC"/><path d="M352 494.500H802M352 497.500H802" stroke="#EAEAEA"/><path d="M351.5 494V498" stroke="#FF0000"/><path d="M360.5 494V498" stroke="#FFFF00"/><path d="M368.5 494V498M370.5 494V498" stroke="#EAEAEA"/><path d="M369.5 494V498" stroke="#000"/><path d="M379.5 494V498" stroke="#FFFF00"/><path d="M387.5 494V498M389.5 494V498" stroke="#EAEAEA"/><path d="M388.5 494V498" stroke="#000"/><path d="M398.5 494V498" stroke="#FFFF00"/><path d="M406.5 494V498M408.5 494V498" stroke="#EAEAEA"/><path d="M407.5 494V498" stroke="#000"/><path d="M416.5 494V498" stroke="#FFFF00"/><path d="M425.5 494V498M427.5 494V498" stroke="#EAEAEA"/><path d="M426.5 494V498" stroke="#000"/><path d="M435.5 494V498" stroke="#FFFF00"/><path d="M444.5 494V498M446.5 494V498" stroke="#EAEAEA"/><path d="M445.5 494V498" stroke="#000"/><path d="M454.5 494V498" stroke="#FFFF00"/><path d="M464.5 494V498" stroke="#FF0000"/><path d="M473.5 494V498" stroke="#FFFF00"/><path d="M481.5 494V498M483.5 494V498" stroke="#EAEAEA"/><path d="M482.5 494V498" stroke="#000"/><path d="M492.5 494V498" stroke="#FFFF00"/><path d="M500.5 494V498M502.5 494V498" stroke="#EAEAEA"/><path d="M501.5 494V498" stroke="#000"/><path d="M511.5 494V498" stroke="#FFFF00"/><path d="M519.5 494V498M521.5 494V498" stroke="#EAEAEA"/><path d="M520.5 494V498" stroke="#000"/><path d="M529.5 494V498" stroke="#FFFF00"/><path d="M538.5 494V498M540.5 494V498" stroke="#EAEAEA"/><path d="M539.5 494V498" stroke="#000"/><path d="M548.5 494V498" stroke="#FFFF00"/><path d="M557.5 494V498M559.5 494V498" stroke="#EAEAEA"/><path d="M558.5 494V498" stroke="#000"/><path d="M567.5 494V498" stroke="#FFFF00"/><path d="M577.5 494V498" stroke="#FF0000"/><path d="M586.5 494V498" stroke="#FFFF00"/><path d="M594.5 494V498M596.5 494V498" stroke="#EAEAEA"/><path d="M595.5 494V498" stroke="#000"/><path d="M605.5 494V498" stroke="#FFFF00"/><path d="M613.5 494V498M615.5 494V498" stroke="#EAEAEA"/><path d="M614.5 494V498" stroke="#000"/><path d="M624.5 494V498" stroke="#FFFF00"/><path d="M632.5 494V498M634.5 494V498" stroke="#EAEAEA"/><path d="M633.5 494V498" stroke="#000"/><path d="M642.5 494V498" stroke="#FFFF00"/><path d="M651.5 494V498M653.5 494V498" stroke="#EAEAEA"/><path d="M652.5 494V498" stroke="#000"/><path d="M661.5 494V498" stroke="#FFFF00"/><path d="M670.5 494V498M672.5 494V498" stroke="#EAEAEA"/><path d="M671.5 494V498" stroke="#000"/><path d="M680.5 494V498" stroke="#FFFF00"/><path d="M690.5 494V498" stroke="#FF0000"/><path d="M699.5 494V498" stroke="#FFFF00"/><path d="M707.5 494V498M709.5 494V498" stroke="#EAEAEA"/><path d="M708.5 494V498" stroke="#000"/><path d="M718.5 494V498" stroke="#FFFF00"/><path d="M726.5 494V498M728.5 494V498" stroke="#EAEAEA"/><path d="M727.5 494V498" stroke="#000"/><path d="M737.5 494V498" stroke="#FFFF00"/><path d="M745.5 494V498M747.5 494V498" stroke="#EAEAEA"/><path d="M746.5 494V498" stroke="#000"/><path d="M755.5 494V498" stroke="#FFFF00"/><path d="M764.5 494V498M766.5 494V498" stroke="#EAEAEA"/><path d="M765.5 494V498" stroke="#000"/><path d="M774.5 494V498" stroke="#FFFF00"/><path d="M783.5 494V498M785.5 494V498" stroke="#EAEAEA"/><path d="M784.5 494V498" stroke="#000"/><path d="M793.5 494V498" stroke="#FFFF00"/><path d="M803.5 494V498" stroke="#FF0000"/><path d="M801.500 494V498" stroke="#000"/><rect x="351.500" y="498.500" width="450" height="20" fill="#DCDCDC" stroke="#000"/><rect x="352" y="519" width="450" height="4" fill="#DCDCDC"/><path d="M352 519.500H802M352 522.500H802" stroke="#EAEAEA"/><path d="M351.5 519V523" stroke="#FF0000"/><path d="M360.5 519V523" stroke="#FFFF00"/><path d="M368.5 519V523M370.5 519V523" stroke="#EAEAEA"/><path d="M369.5 519V523" stroke="#000"/><path d="M379.5 519V523" stroke="#FFFF00"/><path d="M387.5 519V523M389.5 519V523" stroke="#EAEAEA"/><path d="M388.5 519V523" stroke="#000"/><path d="M398.5 519V523" stroke="#FFFF00"/><path d="M406.5 519V523M408.5 519V523" stroke="#EAEAEA"/><path d="M407.5 519V523" stroke="#000"/><path d="M416.5 519V523" stroke="#FFFF00"/><path d="M425.5 519V523M427.5 519V523" stroke="#EAEAEA"/><path d="M426.5 519V523" stroke="#000"/><path d="M435.5 519V523" stroke="#FFFF00"/><path d="M444.5 519V523M446.5 519V523" stroke="#EAEAEA"/><path d="M445.5 519V523" stroke="#000"/><path d="M454.5 519V523" stroke="#FFFF00"/><path d="M464.5 519V523" stroke="#FF0000"/><path d="M473.5 519V523" stroke="#FFFF00"/><path d="M481.5 519V523M483.5 519V523" stroke="#EAEAEA"/><path d="M482.5 519V523" stroke="#000"/><path d="M492.5 519V523" stroke="#FFFF00"/><path d="M500.5 519V523M502.5 519V523" stroke="#EAEAEA"/><path d="M501.5 519V523" stroke="#000"/><path d="M511.5 519V523" stroke="#FFFF00"/><path d="M519.5 519V523M521.5 519V523" stroke="#EAEAEA"/><path d="M520.5 519V523" stroke="#000"/><path d="M529.5 519V523" stroke="#FFFF00"/><path d="M538.5 519V523M540.5 519V523" stroke="#EAEAEA"/><path d="M539.5 519V523" stroke="#000"/><path d="M548.5 519V523" stroke="#FFFF00"/><path d="M557.5 519V523M559.5 519V523" stroke="#EAEAEA"/><path d="M558.5 519V523" stroke="#000"/><path d="M567.5 519V523" stroke="#FFFF00"/><path d="M577.5 519V523" stroke="#FF0000"/><path d="M586.5 519V523" stroke="#FFFF00"/><path d="M594.5 519V523M596.5 519V523" stroke="#EAEAEA"/><path d="M595.5 519V523" stroke="#000"/><path d="M605.5 519V523" stroke="#FFFF00"/><path d="M613.5 519V523M615.5 519V523" stroke="#EAEAEA"/><path d="M614.5 519V523" stroke="#000"/><path d="M624.5 519V523" stroke="#FFFF00"/><path d="M632.5 519V523M634.5 519V523" stroke="#EAEAEA"/><path d="M633.5 519V523" stroke="#000"/><path d="M642.5 519V523" stroke="#FFFF00"/><path d="M651.5 519V523M653.5 519V523" stroke="#EAEAEA"/><path d="M652.5 519V523" stroke="#000"/><path d="M661.5 519V523" stroke="#FFFF00"/><path d="M670.5 519V523M672.5 519V523" stroke="#EAEAEA"/><path d="M671.5 519V523" stroke="#000"/><path d="M680.5 519V523" stroke="#FFFF00"/><path d="M690.5 519V523" stroke="#FF0000"/><path d="M699.5 519V523" stroke="#FFFF00"/><path d="M707.5 519V523M709.5 519V523" stroke="#EAEAEA"/><path d="M708.5 519V523" stroke="#000"/><path d="M718.5 519V523" stroke="#FFFF00"/><path d="M726.5 519V523M728.5 519V523" stroke="#EAEAEA"/><path d="M727.5 519V523" stroke="#000"/><path d="M737.5 519V523" stroke="#FFFF00"/><path d="M745.5 519V523M747.5 519V523" stroke="#EAEAEA"/><path d="M746.5 519V523" stroke="#000"/><path d="M755.5 519V523" stroke="#FFFF00"/><path d="M764.5 519V523M766.5 519V523" stroke="#EAEAEA"/><path d="M765.5 519V523" stroke="#000"/><path d="M774.5 519V523" stroke="#FFFF00"/><path d="M783.5 519V523M785.5 519V523" stroke="#EAEAEA"/><path d="M784.5 519V523" stroke="#000"/><path d="M793.5 519V523" stroke="#FFFF00"/><path d="M803.5 519V523" stroke="#FF0000"/><path d="M801.500 519V523" stroke="#000"/><rect x="351.500" y="523.500" width="450" height="20" fill="#DCDCDC" stroke="#000"/><rect x="352" y="544" width="450" height="4" fill="#DCDCDC"/><path d="M352 544.500H802M352 547.500H802" stroke="#EAEAEA"/><path d="M351.5 544V548" stroke="#FF0000"/><path d="M360.5 544V548" stroke="#FFFF00"/><path d="M368.5 544V548M370.5 544V548" stroke="#EAEAEA"/><path d="M369.5 544V548" stroke="#000"/><path d="M379.5 544V548" stroke="#FFFF00"/><path d="M387.5 544V548M389.5 544V548" stroke="#EAEAEA"/><path d="M388.5 544V548" stroke="#000"/><path d="M398.5 544V548" stroke="#FFFF00"/><path d="M406.5 544V548M408.5 544V548" stroke="#EAEAEA"/><path d="M407.5 544V548" stroke="#000"/><path d="M416.5 544V548" stroke="#FFFF00"/><path d="M425.5 544V548M427.5 544V548" stroke="#EAEAEA"/><path d="M426.5 544V548" stroke="#000"/><path d="M435.5 544V548" stroke="#FFFF00"/><path d="M444.5 544V548M446.5 544V548" stroke="#EAEAEA"/><path d="M445.5 544V548" stroke="#000"/><path d="M454.5 544V548" stroke="#FFFF00"/><path d="M464.5 544V548" stroke="#FF0000"/><path d="M473.5 544V548" stroke="#FFFF00"/><path d="M481.5 544V548M483.5 544V548" stroke="#EAEAEA"/><path d="M482.5 544V548" stroke="#000"/><path d="M492.5 544V548" stroke="#FFFF00"/><path d="M500.5 544V548M502.5 544V548" stroke="#EAEAEA"/><path d="M501.5 544V548" stroke="#000"/><path d="M511.5 544V548" stroke="#FFFF00"/><path d="M519.5 544V548M521.5 544V548" stroke="#EAEAEA"/><path d="M520.5 544V548" stroke="#000"/><path d="M529.5 544V548" stroke="#FFFF00"/><path d="M538.5 544V548M540.5 544V548" stroke="#EAEAEA"/><path d="M539.5 544V548" stroke="#000"/><path d="M548.5 544V548" stroke="#FFFF00"/><path d="M557.5 544V548M559.5 544V548" stroke="#EAEAEA"/><path d="M558.5 544V548" stroke="#000"/><path d="M567.5 544V548" stroke="#FFFF00"/><path d="M577.5 544V548" stroke="#FF0000"/><path d="M586.5 544V548" stroke="#FFFF00"/><path d="M594.5 544V548M596.5 544V548" stroke="#EAEAEA"/><path d="M595.5 544V548" stroke="#000"/><path d="M605.5 544V548" stroke="#FFFF00"/><path d="M613.5 544V548M615.5 544V548" stroke="#EAEAEA"/><path d="M614.5 544V548" stroke="#000"/><path d="M624.5 544V548" stroke="#FFFF00"/><path d="M632.5 544V548M634.5 544V548" stroke="#EAEAEA"/><path d="M633.5 544V548" stroke="#000"/><path d="M642.5 544V548" stroke="#FFFF00"/><path d="M651.5 544V548M653.5 544V548" stroke="#EAEAEA"/><path d="M652.5 544V548" stroke="#000"/><path d="M661.5 544V548" stroke="#FFFF00"/><path d="M670.5 544V548M672.5 544V548" stroke="#EAEAEA"/><path d="M671.5 544V548" stroke="#000"/><path d="M680.5 544V548" stroke="#FFFF00"/><path d="M690.5 544V548" stroke="#FF0000"/><path d="M699.5 544V548" stroke="#FFFF00"/><path d="M707.5 544V548M709.5 544V548" stroke="#EAEAEA"/><path d="M708.5 544V548" stroke="#000"/><path d="M718.5 544V548" stroke="#FFFF00"/><path d="M726.5 544V548M728.5 544V548" stroke="#EAEAEA"/><path d="M727.5 544V548" stroke="#000"/><path d="M737.5 544V548" stroke="#FFFF00"/><path d="M745.5 544V548M747.5 544V548" stroke="#EAEAEA"/><path d="M746.5 544V548" stroke="#000"/><path d="M755.5 544V548" stroke="#FFFF00"/><path d="M764.5 544V548M766.5 544V548" stroke="#EAEAEA"/><path d="M765.5 544V548" stroke="#000"/><path d="M774.5 544V548" stroke="#FFFF00"/><path d="M783.5 544V548M785.5 544V548" stroke="#EAEAEA"/><path d="M784.5 544V548" stroke="#000"/><path d="M793.5 544V548" stroke="#FFFF00"/><path d="M803.5 544V548" stroke="#FF0000"/><path d="M801.500 544V548" stroke="#000"/><rect x="351.500" y="548.500" width="450" height="20" fill="#DCDCDC" stroke="#000"/><rect x="352" y="569" width="450" height="4" fill="#DCDCDC"/><path d="M352 569.500H802M352 572.500H802" stroke="#EAEAEA"/><path d="M351.5 569V573" stroke="#FF0000"/><path d="M360.5 569V573" stroke="#FFFF00"/><path d="M368.5 569V573M370.5 569V573" stroke="#EAEAEA"/><path d="M369.5 569V573" stroke="#000"/><path d="M379.5 569V573" stroke="#FFFF00"/><path d="M387.5 569V573M389.5 569V573" stroke="#EAEAEA"/><path d="M388.5 569V573" stroke="#000"/><path d="M398.5 569V573" stroke="#FFFF00"/><path d="M406.5 569V573M408.5 569V573" stroke="#EAEAEA"/><path d="M407.5 569V573" stroke="#000"/><path d="M416.5 569V573" stroke="#FFFF00"/><path d="M425.5 569V573M427.5 569V573" stroke="#EAEAEA"/><path d="M426.5 569V573" stroke="#000"/><path d="M435.5 569V573" stroke="#FFFF00"/><path d="M444.5 569V573M446.5 569V573" stroke="#EAEAEA"/><path d="M445.5 569V573" stroke="#000"/><path d="M454.5 569V573" stroke="#FFFF00"/><path d="M464.5 569V573" stroke="#FF0000"/><path d="M473.5 569V573" stroke="#FFFF00"/><path d="M481.5 569V573M483.5 569V573" stroke="#EAEAEA"/><path d="M482.5 569V573" stroke="#000"/><path d="M492.5 569V573" stroke="#FFFF00"/><path d="M500.5 569V573M502.5 569V573" stroke="#EAEAEA"/><path d="M501.5 569V573" stroke="#000"/><path d="M511.5 569V573" stroke="#FFFF00"/><path d="M519.5 569V573M521.5 569V573" stroke="#EAEAEA"/><path d="M520.5 569V573" stroke="#000"/><path d="M529.5 569V573" stroke="#FFFF00"/><path d="M538.5 569V573M540.5 569V573" stroke="#EAEAEA"/><path d="M539.5 569V573" stroke="#000"/><path d="M548.5 569V573" stroke="#FFFF00"/><path d="M557.5 569V573M559.5 569V573" stroke="#EAEAEA"/><path d="M558.5 569V573" stroke="#000"/><path d="M567.5 569V573" stroke="#FFFF00"/><path d="M577.5 569V573" stroke="#FF0000"/><path d="M586.5 569V573" stroke="#FFFF00"/><path d="M594.5 569V573M596.5 569V573" stroke="#EAEAEA"/><path d="M595.5 569V573" stroke="#000"/><path d="M605.5 569V573" stroke="#FFFF00"/><path d="M613.5 569V573M615.5 569V573" stroke="#EAEAEA"/><path d="M614.5 569V573" stroke="#000"/><path d="M624.5 569V573" stroke="#FFFF00"/><path d="M632.5 569V573M634.5 569V573" stroke="#EAEAEA"/><path d="M633.5 569V573" stroke="#000"/><path d="M642.5 569V573" stroke="#FFFF00"/><path d="M651.5 569V573M653.5 569V573" stroke="#EAEAEA"/><path d="M652.5 569V573" stroke="#000"/><path d="M661.5 569V573" stroke="#FFFF00"/><path d="M670.5 569V573M672.5 569V573" stroke="#EAEAEA"/><path d="M671.5 569V573" stroke="#000"/><path d="M680.5 569V573" stroke="#FFFF00"/><path d="M690.5 569V573" stroke="#FF0000"/><path d="M699.5 569V573" stroke="#FFFF00"/><path d="M707.5 569V573M709.5 569V573" stroke="#EAEAEA"/><path d="M708.5 569V573" stroke="#000"/><path d="M718.5 569V573" stroke="#FFFF00"/><path d="M726.5 569V573M728.5 569V573" stroke="#EAEAEA"/><path d="M727.5 569V573" stroke="#000"/><path d="M737.5 569V573" stroke="#FFFF00"/><path d="M745.5 569V573M747.5 569V573" stroke="#EAEAEA"/><path d="M746.5 569V573" stroke="#000"/><path d="M755.5 569V573" stroke="#FFFF00"/><path d="M764.5 569V573M766.5 569V573" stroke="#EAEAEA"/><path d="M765.5 569V573" stroke="#000"/><path d="M774.5 569V573" stroke="#FFFF00"/><path d="M783.5 569V573M785.5 569V573" stroke="#EAEAEA"/><path d="M784.5 569V573" stroke="#000"/><path d="M793.5 569V573" stroke="#FFFF00"/><path d="M803.5 569V573" stroke="#FF0000"/><path d="M801.500 569V573" stroke="#000"/><rect x="351.500" y="573.500" width="450" height="20" fill="#DCDCDC" stroke="#000"/><rect x="352" y="594" width="450" height="4" fill="#DCDCDC"/><path d="M352 594.500H802M352 597.500H802" stroke="#EAEAEA"/><path d="M351.5 594V598" stroke="#FF0000"/><path d="M360.5 594V598" stroke="#FFFF00"/><path d="M368.5 594V598M370.5 594V598" stroke="#EAEAEA"/><path d="M369.5 594V598" stroke="#000"/><path d="M379.5 594V598" stroke="#FFFF00"/><path d="M387.5 594V598M389.5 594V598" stroke="#EAEAEA"/><path d="M388.5 594V598" stroke="#000"/><path d="M398.5 594V598" stroke="#FFFF00"/><path d="M406.5 594V598M408.5 594V598" stroke="#EAEAEA"/><path d="M407.5 594V598" stroke="#000"/><path d="M416.5 594V598" stroke="#FFFF00"/><path d="M425.5 594V598M427.5 594V598" stroke="#EAEAEA"/><path d="M426.5 594V598" stroke="#000"/><path d="M435.5 594V598" stroke="#FFFF00"/><path d="M444.5 594V598M446.5 594V598" stroke="#EAEAEA"/><path d="M445.5 594V598" stroke="#000"/><path d="M454.5 594V598" stroke="#FFFF00"/><path d="M464.5 594V598" stroke="#FF0000"/><path d="M473.5 594V598" stroke="#FFFF00"/><path d="M481.5 594V598M483.5 594V598" stroke="#EAEAEA"/><path d="M482.5 594V598" stroke="#000"/><path d="M492.5 594V598" stroke="#FFFF00"/><path d="M500.5 594V598M502.5 594V598" stroke="#EAEAEA"/><path d="M501.5 594V598" stroke="#000"/><path d="M511.5 594V598" stroke="#FFFF00"/><path d="M519.5 594V598M521.5 594V598" stroke="#EAEAEA"/><path d="M520.5 594V598" stroke="#000"/><path d="M529.5 594V598" stroke="#FFFF00"/><path d="M538.5 594V598M540.5 594V598" stroke="#EAEAEA"/><path d="M539.5 594V598" stroke="#000"/><path d="M548.5 594V598" stroke="#FFFF00"/><path d="M557.5 594V598M559.5 594V598" stroke="#EAEAEA"/><path d="M558.5 594V598" stroke="#000"/><path d="M567.5 594V598" stroke="#FFFF00"/><path d="M577.5 594V598" stroke="#FF0000"/><path d="M586.5 594V598" stroke="#FFFF00"/><path d="M594.5 594V598M596.5 594V598" stroke="#EAEAEA"/><path d="M595.5 594V598" stroke="#000"/><path d="M605.5 594V598" stroke="#FFFF00"/><path d="M613.5 594V598M615.5 594V598" stroke="#EAEAEA"/><path d="M614.5 594V598" stroke="#000"/><path d="M624.5 594V598" stroke="#FFFF00"/><path d="M632.5 594V598M634.5 594V598" stroke="#EAEAEA"/><path d="M633.5 594V598" stroke="#000"/><path d="M642.5 594V598" stroke="#FFFF00"/><path d="M651.5 594V598M653.5 594V598" stroke="#EAEAEA"/><path d="M652.5 594V598" stroke="#000"/><path d="M661.5 594V598" stroke="#FFFF00"/><path d="M670.5 594V598M672.5 594V598" stroke="#EAEAEA"/><path d="M671.5 594V598" stroke="#000"/><path d="M680.5 594V598" stroke="#FFFF00"/><path d="M690.5 594V598" stroke="#FF0000"/><path d="M699.5 594V598" stroke="#FFFF00"/><path d="M707.5 594V598M709.5 594V598" stroke="#EAEAEA"/><path d="M708.5 594V598" stroke="#000"/><path d="M718.5 594V598" stroke="#FFFF00"/><path d="M726.5 594V598M728.5 594V598" stroke="#EAEAEA"/><path d="M727.5 594V598" stroke="#000"/><path d="M737.5 594V598" stroke="#FFFF00"/><path d="M745.5 594V598M747.5 594V598" stroke="#EAEAEA"/><path d="M746.5 594V598" stroke="#000"/><path d="M755.5 594V598" stroke="#FFFF00"/><path d="M764.5 594V598M766.5 594V598" stroke="#EAEAEA"/><path d="M765.5 594V598" stroke="#000"/><path d="M774.5 594V598" stroke="#FFFF00"/><path d="M783.5 594V598M785.5 594V598" stroke="#EAEAEA"/><path d="M784.5 594V598" stroke="#000"/><path d="M793.5 594V598" stroke="#FFFF00"/><path d="M803.5 594V598" stroke="#FF0000"/><path d="M801.500 594V598" stroke="#000"/><rect x="351.500" y="598.500" width="450" height="20" fill="#DCDCDC" stroke="#000"/></svg>
<div class="t b" style="left:261px;top:451px">Monday</div>
<div class="t b" style="left:261px;top:476px">Tuesday</div>
<div class="t b" style="left:261px;top:502px">Wednesday</div>
<div class="t b" style="left:261px;top:527px">Thursday</div>
<div class="t b" style="left:261px;top:552px;color:#F00000">*Friday*</div>
<div class="t b" style="left:261px;top:575px">Saturday</div>
<div class="t b" style="left:261px;top:599px">Sunday</div>
<div class="gbtn" style="left:382px;top:637px;width:65px;height:24px;line-height:22px">Cancel</div>
<div class="gbtn" style="left:454px;top:637px;width:64px;height:24px;line-height:22px;padding-left:10px">Back</div>
<div class="gbtn" style="left:524px;top:637px;width:60px;height:24px;line-height:22px;padding-right:12px">Next</div>
<div class="gbtn" style="left:591px;top:637px;width:50px;height:24px;line-height:22px">Last</div>
<div class="a" style="left:462px;top:645px;border:4px solid transparent;border-right:4px solid #2A2A30;border-left:0"></div>
<div class="a" style="left:571px;top:645px;border:4px solid transparent;border-left:4px solid #2A2A30;border-right:0"></div>
<div class="a" style="left:387px;top:212px;width:251px;height:314px;border-radius:7px 7px 0 0;background:#0C4FE4;border:1px solid #0831D0;border-top-color:#1450DE;box-shadow:inset 0 0 0 1px #1862EC"></div>
<div class="a" style="left:388px;top:213px;width:249px;height:28px;border-radius:6px 6px 0 0;background:linear-gradient(#2E7BF2 0,#0A5BE6 12%,#0453DE 35%,#0557E6 65%,#0A62F4 88%,#0450DC 100%)"></div>
<div class="t mono" style="left:394px;top:220px;color:#fff;text-shadow:1px 1px 0 #0A2A8C">Define New Event(s)</div>
<svg class="a" style="left:612px;top:217px" width="21" height="21" viewBox="0 0 21 21"><defs><linearGradient id="cg" x1="0" y1="0" x2="1" y2="1"><stop offset="0" stop-color="#E8875C"/><stop offset="0.500" stop-color="#D9502A"/><stop offset="1" stop-color="#B93312"/></linearGradient></defs><rect x="0.500" y="0.500" width="20" height="20" rx="3" fill="url(#cg)" stroke="#fff"/><path d="M6 6l9 9M15 6l-9 9" stroke="#fff" stroke-width="2.200"/></svg>
<div class="a" style="left:390px;top:241px;width:245px;height:281px;background:#F4F4F4"></div>
<div class="cb" style="left:429px;top:254px"><svg width="10" height="10" viewBox="0 0 10 10"><path d="M1.200 5L4 8L8.800 2" fill="none" stroke="#3C3C3C" stroke-width="2"/></svg></div>
<div class="t" style="left:447px;top:253px">Monday</div>
<div class="cb" style="left:429px;top:276px"><svg width="10" height="10" viewBox="0 0 10 10"><path d="M1.200 5L4 8L8.800 2" fill="none" stroke="#3C3C3C" stroke-width="2"/></svg></div>
<div class="t" style="left:447px;top:275px">Tuesday</div>
<div class="cb" style="left:429px;top:298px"><svg width="10" height="10" viewBox="0 0 10 10"><path d="M1.200 5L4 8L8.800 2" fill="none" stroke="#3C3C3C" stroke-width="2"/></svg></div>
<div class="t" style="left:447px;top:297px">Wednesday</div>
<div class="cb" style="left:429px;top:320px"><svg width="10" height="10" viewBox="0 0 10 10"><path d="M1.200 5L4 8L8.800 2" fill="none" stroke="#3C3C3C" stroke-width="2"/></svg></div>
<div class="t" style="left:447px;top:319px">Thursday</div>
<div class="cb" style="left:429px;top:342px"><svg width="10" height="10" viewBox="0 0 10 10"><path d="M1.200 5L4 8L8.800 2" fill="none" stroke="#3C3C3C" stroke-width="2"/></svg></div>
<div class="t" style="left:447px;top:341px">Friday</div>
<div class="cb" style="left:535px;top:254px"><svg width="10" height="10" viewBox="0 0 10 10"><path d="M1.200 5L4 8L8.800 2" fill="none" stroke="#3C3C3C" stroke-width="2"/></svg></div>
<div class="t" style="left:553px;top:253px">Saturday</div>
<div class="cb" style="left:535px;top:276px"><svg width="10" height="10" viewBox="0 0 10 10"><path d="M1.200 5L4 8L8.800 2" fill="none" stroke="#3C3C3C" stroke-width="2"/></svg></div>
<div class="t" style="left:553px;top:275px">Sunday</div>
<div class="cb" style="left:535px;top:320px"></div>
<div class="t" style="left:553px;top:319px">Mon-Fri</div>
<div class="cb" style="left:535px;top:342px"><svg width="10" height="10" viewBox="0 0 10 10"><path d="M1.200 5L4 8L8.800 2" fill="none" stroke="#3C3C3C" stroke-width="2"/></svg></div>
<div class="t" style="left:553px;top:341px">All</div>
<div class="t" style="left:438px;top:368px">Hour</div>
<div class="t" style="left:522px;top:368px">Minutes</div>
<div class="combo" style="left:437px;top:386px;width:66px;height:26px"></div>
<div class="t" style="left:440px;top:391px">00</div>
<div class="arr" style="left:482px;top:389px;width:18px;height:20px"></div>
<div class="combo" style="left:521px;top:386px;width:43px;height:26px"></div>
<div class="t" style="left:524px;top:391px">00</div>
<div class="arr" style="left:543px;top:389px;width:18px;height:20px"></div>
<div class="t" style="left:437px;top:421px">Value</div>
<div class="combo" style="left:436px;top:439px;width:144px;height:24px;border-color:#9A9A9A"></div>
<div class="a" style="left:438px;top:441px;width:140px;height:20px;border:1px dashed #8A8A8A"></div>
<div class="t" style="left:439px;top:443px">On</div>
<div class="arr" style="left:559px;top:441px;width:18px;height:20px;background:linear-gradient(#F4F6FB 0,#E8ECF6 45%,#7FA6E8 55%,#B5CDF6 100%);border-color:#B8C4DC"></div>
<div class="gbtn" style="left:425px;top:487px;width:74px;height:20px;line-height:18px"></div>
<div class="gbtn" style="left:530px;top:487px;width:72px;height:20px;line-height:18px;text-align:right;padding-right:17px">Cancel</div>
<div class="a" style="left:436px;top:464px;width:144px;height:42px;background:#fff;border:1px solid #000"></div>
<div class="a" style="left:437px;top:485px;width:142px;height:20px;background:#5596FA"></div>
<div class="t" style="left:439px;top:467px">Off</div>
<div class="t w" style="left:439px;top:487px">On</div>
<div class="a" style="left:0;top:738px;width:1024px;height:30px;background:linear-gradient(#3A80EE 0,#2C6FE8 8%,#2663E0 20%,#245EDC 50%,#2560DE 80%,#1D4FC4 100%)"></div>
<div class="a" style="left:0;top:738px;width:97px;height:30px;border-radius:0 12px 14px 0 / 0 14px 16px 0;background:linear-gradient(#5BAF5B 0,#3F9A3F 12%,#388E38 45%,#348834 75%,#2A742A 100%);box-shadow:inset 0 2px 2px #7CC87C,2px 0 3px #1A3C9C"></div>
<svg class="a" style="left:9px;top:743px" width="22" height="20" viewBox="0 0 22 20"><path d="M3 2c3-2 5-1 7 0l-2 7c-2-1-4-2-7 0z" fill="#E8542A"/><path d="M11.500 2.500c2 1 5 2 8-0.500l-2 7c-3 2-6 1-8 0z" fill="#6CB83C"/><path d="M0.500 10.500c3-2 5-1 7 0l-2 7c-2-1-4-2-7 0z" fill="#3C78E0"/><path d="M9 11c2 1 5 2 8-0.500l-2 7c-3 2-6 1-8 0z" fill="#F0C020"/></svg>
<div class="t w" style="left:38px;top:741px;font-family:'WenQuanYi Zen Hei','Noto Sans CJK SC',sans-serif;font-size:18px;line-height:22px;font-style:italic;transform:skewX(-12deg);text-shadow:1px 1px 1px #1C4C1C">开始</div>
<div class="a" style="left:107px;top:742px;width:158px;height:23px;border-radius:3px;background:linear-gradient(#5C98F6 0,#3C82F2 15%,#377CEE 70%,#3274E4 100%);border:1px solid #2C64D8;box-shadow:inset 1px 1px 0 #78AAF8"></div>
<div class="t w" style="left:135px;top:746px;font-family:'Liberation Mono','WenQuanYi Zen Hei','Noto Sans CJK SC',monospace;font-size:12px;line-height:15px;letter-spacing:-0.200px"></div>
<div class="a" style="left:267px;top:742px;width:159px;height:23px;border-radius:3px;background:#1C4CB8;border:1px solid #163C98;box-shadow:inset 1px 1px 2px #12328A"></div>
<div class="t w" style="left:295px;top:746px;font-family:'Liberation Mono','WenQuanYi Zen Hei','Noto Sans CJK SC',monospace;font-size:12px;line-height:15px;letter-spacing:-0.200px"></div>
<div class="a" style="left:427px;top:742px;width:159px;height:23px;border-radius:3px;background:linear-gradient(#5C98F6 0,#3C82F2 15%,#377CEE 70%,#3274E4 100%);border:1px solid #2C64D8;box-shadow:inset 1px 1px 0 #78AAF8"></div>
<div class="t w" style="left:455px;top:746px;font-family:'Liberation Mono','WenQuanYi Zen Hei','Noto Sans CJK SC',monospace;font-size:12px;line-height:15px;letter-spacing:-0.200px"></div>
<div class="t w" style="left:136px;top:745px;font-family:'Liberation Mono','WenQuanYi Zen Hei','Noto Sans CJK SC',monospace;font-size:12px;line-height:16px;letter-spacing:-1.2px"><span style="letter-spacing:0">文档</span> 2 - Microso...</div>
<div class="t w" style="left:296px;top:746px;font-family:'Liberation Mono','WenQuanYi Zen Hei','Noto Sans CJK SC',monospace;font-size:12px;line-height:16px;letter-spacing:-1.2px">Metasys</div>
<div class="t w" style="left:455px;top:745px;font-family:'Liberation Mono','WenQuanYi Zen Hei','Noto Sans CJK SC',monospace;font-size:12px;line-height:16px;letter-spacing:-1.2px">Metasys - Events</div>
<svg class="a" style="left:116px;top:745px" width="17" height="17" viewBox="0 0 17 17"><path d="M4.500 1.500h8l3 3v11h-11z" fill="#fff" stroke="#8090B0"/><path d="M7 6h7M7 8h7M7 10h7M7 12h7" stroke="#B8C4DC"/><rect x="0.500" y="2.500" width="9" height="9" fill="#2C4CA8" stroke="#fff" stroke-width="0.800"/><text x="1.200" y="10.300" font-family="Liberation Sans,sans-serif" font-weight="bold" font-size="9" fill="#fff" textLength="7.500" lengthAdjust="spacingAndGlyphs">W</text></svg>
<svg class="a" style="left:277px;top:746px" width="16" height="16" viewBox="0 0 16 16"><rect x="0.700" y="0.700" width="14.600" height="14.600" rx="1.500" fill="#FBFBFA" stroke="#5E7E9C" stroke-width="0.900"/><path d="M1 14.800h14" stroke="#3C5C78" stroke-width="1.200"/><path d="M6.500 8.500c-1.500-2 1.500-3.500 3-6M8 8.500c-1-1.500 1.500-2.500 2.800-4.500" stroke="#EE7A10" stroke-width="1.300" fill="none"/><path d="M4 9.500h6.500M5 11.200h4.500M3 13h9" stroke="#4A7090" stroke-width="1"/><path d="M11 9c2.500 0 2.500 2.800 0 3" stroke="#4A7090" stroke-width="1.100" fill="none"/></svg>
<svg class="a" style="left:436px;top:745px" width="16" height="17" viewBox="0 0 16 17"><rect width="16" height="17" fill="#fff"/><path d="M1 3l3 2M15 3l-3 2M8 0v3M3 0.500l2 3M13 0.500l-2 3M0 7h2M16 7h-2" stroke="#F00000" stroke-width="1"/><path d="M4 13V8a4 4 0 0 1 8 0v5z" fill="#E80000"/><rect x="2" y="13" width="12" height="3" fill="#900000"/></svg>
<div class="a" style="left:911px;top:738px;width:113px;height:30px;background:linear-gradient(#2AA8F4 0,#16A0F0 10%,#1096EA 50%,#1298EC 80%,#0E80D0 100%);border-left:1px solid #0E5CB8;box-shadow:inset 1px 0 0 #4CB8F6"></div>
<svg class="a" style="left:838px;top:744px" width="17" height="17" viewBox="0 0 17 17"><path d="M3.500 5.500l1-2.500 1.500 2 1.500-2 1.500 2 1.500-2 1.500 2" fill="none" stroke="#000" stroke-width="1"/><rect x="0.600" y="6.100" width="15.800" height="9.300" rx="1.500" fill="#FFFFFF" stroke="#000" stroke-width="1.200"/><g shape-rendering="crispEdges" stroke="#000" stroke-width="1.400"><path d="M2 8.700h13" stroke-dasharray="1.300 0.700"/><path d="M2 10.800h13" stroke-dasharray="1.300 0.700"/><path d="M2 12.900h2M5 12.900h7M13 12.900h2"/></g></svg>
<svg class="a" style="left:860px;top:745px" width="15" height="17" viewBox="0 0 15 17"><path d="M1 1h12v11H8l2 3-5-3H1z" fill="#F8F4A0" stroke="#000" stroke-width="1.300"/><text x="3.500" y="10.500" font-family="Liberation Sans,sans-serif" font-weight="bold" font-size="10" fill="#1010A0">?</text><path d="M13.500 3v10.500H9" stroke="#000" stroke-width="1" fill="none"/></svg>
<svg class="a" style="left:885px;top:743px" width="12" height="20" viewBox="0 0 12 20"><rect x="4" y="1.500" width="6.500" height="4" fill="none" stroke="#fff" stroke-width="1.300"/><rect x="1.500" y="4" width="6" height="4" fill="#2560DE" stroke="#fff" stroke-width="1.300"/><path d="M2.500 13.500h6l-3 3z" fill="#fff"/></svg>
<svg class="a" style="left:902px;top:743px" width="20" height="20" viewBox="0 0 20 20"><defs><radialGradient id="rg" cx="0.400" cy="0.350" r="0.700"><stop offset="0" stop-color="#5CA8F8"/><stop offset="0.600" stop-color="#1C6CE4"/><stop offset="1" stop-color="#1450C0"/></radialGradient></defs><circle cx="10" cy="10" r="9" fill="url(#rg)" stroke="#8CC4FA" stroke-width="1.200"/><path d="M11.500 5.500L7 10l4.500 4.500" fill="none" stroke="#fff" stroke-width="2.200"/></svg>
<svg class="a" style="left:922px;top:745px" width="16" height="16" viewBox="0 0 16 16"><rect x="1" y="1" width="6" height="6" rx="1.500" fill="none" stroke="#E85A1C" stroke-width="1.800"/><rect x="9" y="2" width="5" height="5" rx="1.500" fill="none" stroke="#4C8CE0" stroke-width="1.600"/><rect x="2" y="9" width="5" height="5" rx="1.500" fill="none" stroke="#F0B818" stroke-width="1.600"/><rect x="9" y="9" width="6" height="6" rx="1.500" fill="none" stroke="#5CB040" stroke-width="1.800"/></svg>
<svg class="a" style="left:940px;top:744px" width="16" height="18" viewBox="0 0 16 18"><rect x="6" y="1" width="9" height="8" fill="#7CC0F4" stroke="#C8DCF4"/><rect x="1" y="5" width="9" height="8" fill="#9CCCF6" stroke="#D8E4F4"/><path d="M3 14h6l1 2H2z" fill="#B8BCCC"/><path d="M9 10h5l1 2H9z" fill="#A8ACC0"/></svg>
<svg class="a" style="left:958px;top:744px" width="17" height="19" viewBox="0 0 17 19"><rect x="0.500" y="1.500" width="9" height="14" fill="#D8D8D4" stroke="#555"/><path d="M2 4h6M2 6.500h6M2 9h6" stroke="#444" stroke-width="1.200"/><rect x="2" y="12" width="2" height="1.500" fill="#E00000"/><circle cx="11" cy="12.500" r="5" fill="#fff" stroke="#222"/><path d="M9.500 9.500v6l4.500-3z" fill="#189818"/></svg>
<div class="t w" style="left:981px;top:745px;font-family:'Liberation Mono','WenQuanYi Zen Hei','Noto Sans CJK SC',monospace;font-weight:normal;font-size:12px;line-height:16px;letter-spacing:-1.2px">11:05</div>
</body></html>
